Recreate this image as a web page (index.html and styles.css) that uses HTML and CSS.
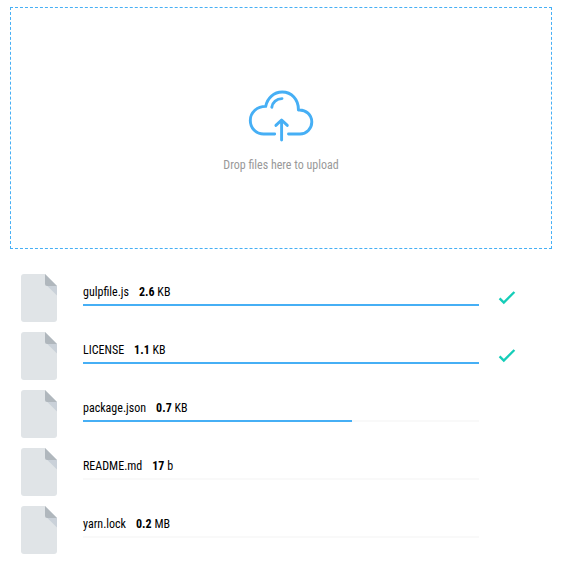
FILE: index.html
```
<!DOCTYPE html>
<html lang="en">
<head>
<meta charset="utf-8">
<title>Upload</title>
<link rel="stylesheet" href="styles.css">
</head>
<body>
<svg class="defs" width="0" height="0">
  <symbol id="file" viewBox="0 0 36 48">
    <path fill="#e0e4e7" d="M3 0h21l12 12v33a3 3 0 0 1-3 3H3a3 3 0 0 1-3-3V3a3 3 0 0 1 3-3z"/>
    <path fill="#cad1d9" d="M26.3 12H36v9.6z"/>
    <path fill="#b0b7bd" d="M24 0l12 12H26a2 2 0 0 1-2-2z"/>
  </symbol>
  <symbol id="check" viewBox="0 0 18 14">
    <path d="M1.6 7.4l4.2 4.2L16.4 1" fill="none" stroke="#15cdb8" stroke-width="2.4"/>
  </symbol>
</svg>
<div class="dropzone">
  <svg class="cloud" width="80" height="62" viewBox="0 0 80 62">
    <path d="M34.7 50H23.6C15.8 50 10.3 43.8 10.3 36.4C10.3 28.8 16.7 22.4 25.7 22.4C27.2 14 34 8 42.2 8C51.5 8 58.6 15.4 58.4 26C66 25.4 71.8 31 71.8 38C71.8 44.6 66.5 50 60 50H48.5"/>
    <path d="M31.8 23.2C32.4 18.3 36.6 14.6 42 14.6M41.6 56V36.2M35.9 41.4L41.6 36L47.3 41.4"/>
  </svg>
  <span class="prompt">Drop files here to upload</span>
</div>
<ul class="files">
  <li class="file"><svg class="icon"><use href="#file"/></svg><div class="info"><div class="label"><span>gulpfile.js</span><span><b>2.6</b> KB</span></div><div class="track"><div class="bar" style="width:100%"></div></div></div><svg class="check"><use href="#check"/></svg></li>
  <li class="file"><svg class="icon"><use href="#file"/></svg><div class="info"><div class="label"><span>LICENSE</span><span><b>1.1</b> KB</span></div><div class="track"><div class="bar" style="width:100%"></div></div></div><svg class="check"><use href="#check"/></svg></li>
  <li class="file"><svg class="icon"><use href="#file"/></svg><div class="info"><div class="label"><span>package.json</span><span><b>0.7</b> KB</span></div><div class="track"><div class="bar" style="width:68%"></div></div></div></li>
  <li class="file"><svg class="icon"><use href="#file"/></svg><div class="info"><div class="label"><span>README.md</span><span><b>17</b> b</span></div><div class="track"></div></div></li>
  <li class="file"><svg class="icon"><use href="#file"/></svg><div class="info"><div class="label"><span>yarn.lock</span><span><b>0.2</b> MB</span></div><div class="track"></div></div></li>
</ul>
</body>
</html>
```
FILE: styles.css
```
* { box-sizing: border-box; }
body {
  margin: 0;
  padding: 7px 10px 0;
  background: #fff;
  color: #000;
  font: 12px/16px "Roboto Condensed", Roboto, sans-serif;
  font-stretch: 75%;
}
.defs { display: block; }
.dropzone {
  height: 242px;
  border: 1px dashed #46aff5;
  display: flex;
  flex-direction: column;
  align-items: center;
  padding-top: 76px;
}
.cloud {
  margin-right: 2px;
  fill: none;
  stroke: #46aff5;
  stroke-width: 2.9;
  stroke-linecap: round;
  stroke-linejoin: round;
}
.prompt { margin-top: 11px; color: #999; }
.files {
  list-style: none;
  margin: 25px 0 0;
  padding: 0 11px;
  display: flex;
  flex-direction: column;
  gap: 10px;
}
.file { display: flex; height: 48px; }
.icon { width: 36px; height: 48px; }
.info { width: 396px; margin-left: 26px; padding-top: 10px; }
.label { display: flex; gap: 10px; height: 20px; }
.label b { font-weight: 700; }
.track { height: 2px; background: #f9f9f9; }
.bar { height: 2px; background: #46aff5; }
.check { width: 18px; height: 14px; margin: 17px 0 0 19px; }
```
